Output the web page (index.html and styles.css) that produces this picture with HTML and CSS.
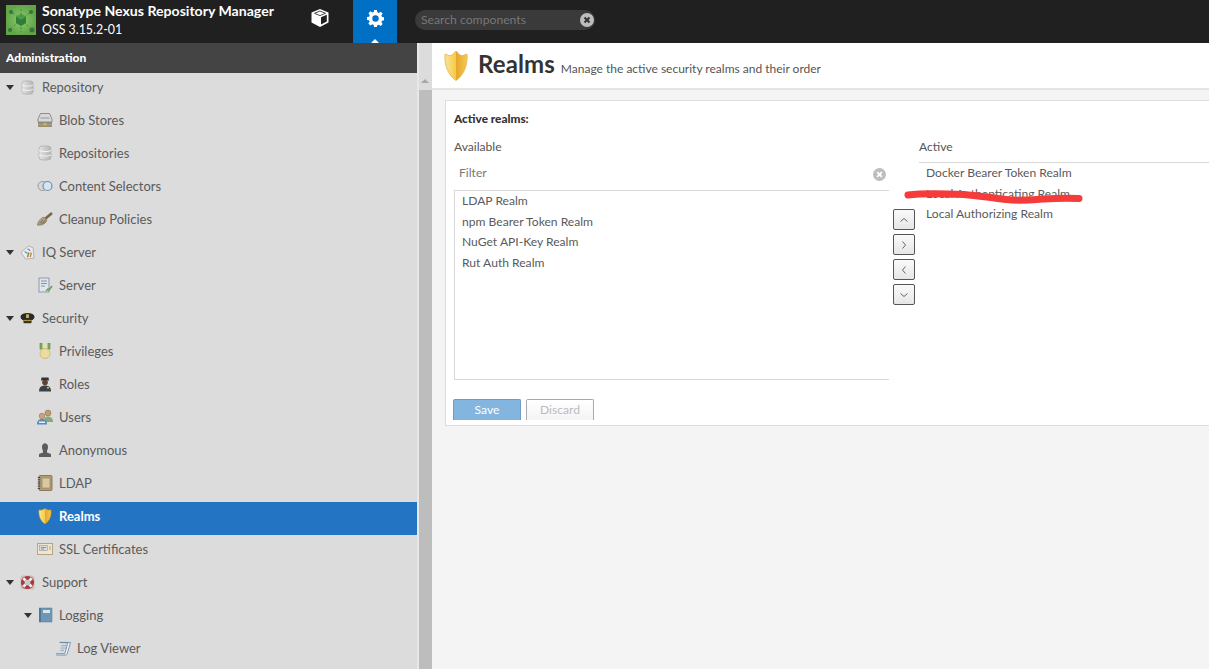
FILE: index.html
```html
<!DOCTYPE html>
<html lang="en">
<head>
<meta charset="utf-8">
<title>Realms</title>
<link rel="stylesheet" href="styles.css">
</head>
<body>
<svg class="defs" width="0" height="0"><defs>
  <radialGradient id="lg"><stop offset="0" stop-color="#8ccb6c"/><stop offset="1" stop-color="#62a548"/></radialGradient>
  <linearGradient id="db" x1="0" x2="1" y1="0" y2="0"><stop offset="0" stop-color="#e4e4e4"/><stop offset="1" stop-color="#b5b5b5"/></linearGradient>
  <linearGradient id="sh" x1="0" x2="1" y1="0" y2="0"><stop offset="0" stop-color="#fbe594"/><stop offset=".48" stop-color="#f6cb4a"/><stop offset=".5" stop-color="#e6a52a"/><stop offset="1" stop-color="#f5c850"/></linearGradient>
  <linearGradient id="brush" x1="0" x2="1" y1="0" y2="1"><stop offset="0" stop-color="#c9b592"/><stop offset="1" stop-color="#8a7a62"/></linearGradient>
</defs></svg>
<header class="top">
  <svg class="logo" viewBox="0 0 30 30"><rect width="30" height="30" fill="url(#lg)"/><path d="M15 14L5 7M15 14l10-7M15 14v-11M15 14L5 24M15 14l10 10M15 14v13" stroke="#3c8a3a" stroke-width="1" stroke-dasharray="2 2"/><circle cx="5" cy="7" r="2" fill="#33753a"/><circle cx="25" cy="7" r="2" fill="#33753a"/><circle cx="4" cy="25" r="2" fill="#33753a"/><circle cx="26" cy="25" r="2.500" fill="#33753a"/><path d="M15 9l5 3v6l-5 3-5-3v-6z" fill="#2f7d38"/><path d="M15 9l5 3-5 3-5-3z" fill="#4a9a48"/></svg>
  <div class="brand"><div class="brand-name">Sonatype Nexus Repository Manager</div><div class="brand-ver">OSS 3.15.2-01</div></div>
  <div class="cube"><svg viewBox="0 0 18 18" width="18" height="18"><path d="M9 0l8.500 3.500v10L9 18 .5 13.500v-10z" fill="#fff"/><path d="M9 2L14.500 4.300 9 6.600 3.500 4.300z" fill="#fff" stroke="#202020" stroke-width=".8"/><path d="M10 8.200l5.800-2.500v6.800L10 15.600z" fill="#202020"/></svg></div>
  <div class="gear-tab"><svg viewBox="0 0 24 24" width="17" height="17"><path fill="#fff" fill-rule="evenodd" d="M10 0h4l.6 3.200 2 .9 2.700-1.800 2.800 2.800-1.800 2.700.9 2 3.100.6v4l-3.100.6-.9 2 1.800 2.700-2.800 2.800-2.700-1.800-2 .9L14 24h-4l-.6-3-2-.9-2.700 1.800-2.800-2.800 1.800-2.700-.9-2L0 14v-4l3-.6.9-2-1.800-2.700 2.800-2.800 2.700 1.800 2-.9zM12 7.500a4.500 4.500 0 100 9 4.500 4.500 0 000-9z"/></svg><span class="tab-arrow"></span></div>
  <div class="search"><span class="search-text">Search components</span><svg viewBox="0 0 14 14" width="14" height="14"><circle cx="7" cy="7" r="7" fill="#bdbdbd"/><path d="M4.500 4.500l5 5M9.500 4.500l-5 5" stroke="#333" stroke-width="2"/></svg></div>
</header>
<div class="body-row">
  <aside class="side">
    <div class="side-title">Administration</div>
    <nav class="tree">
      <div class="row l0"><span class="arrow"></span><svg class="ic" viewBox="0 0 16 16"><rect x="2" y="1" width="12" height="14" rx="3" fill="url(#db)" stroke="#aaa" stroke-width=".7"/><path d="M2 5.500c3 1.500 9 1.500 12 0M2 10c3 1.500 9 1.500 12 0" stroke="#f4f4f4" fill="none"/></svg><span>Repository</span></div>
      <div class="row l1"><svg class="ic" viewBox="0 0 16 16"><path d="M3.500 1.500h9L15 7v3H1V7z" fill="#d8d8d8" stroke="#8d8d8d"/><path d="M3.500 6h9" stroke="#999"/><rect x="1" y="10" width="14" height="2.500" fill="#8b8b8b"/><rect x="1" y="12.500" width="14" height="2.500" fill="#99906f"/><rect x="6.500" y="11" width="3" height="2.500" fill="#e0b030"/></svg><span>Blob Stores</span></div>
      <div class="row l1"><svg class="ic" viewBox="0 0 16 16"><rect x="2" y="1" width="12" height="14" rx="3" fill="url(#db)" stroke="#aaa" stroke-width=".7"/><path d="M2 5.500c3 1.500 9 1.500 12 0M2 10c3 1.500 9 1.500 12 0" stroke="#f4f4f4" fill="none"/></svg><span>Repositories</span></div>
      <div class="row l1"><svg class="ic" viewBox="0 0 16 16"><circle cx="5.500" cy="8" r="4.500" fill="#d8d8d8" stroke="#9a9a9a"/><circle cx="10.500" cy="8" r="4.500" fill="#d6e4f0" stroke="#6b8eb0" stroke-width="1.200"/></svg><span>Content Selectors</span></div>
      <div class="row l1"><svg class="ic" viewBox="0 0 16 16"><path d="M0 14c2-5 3.500-7 7-8l3 3c-1 3.500-5 6-10 5z" fill="url(#brush)" stroke="#7b6a52" stroke-width=".5"/><path d="M8.500 7.500L15 2" stroke="#7a6742" stroke-width="2.600"/><path d="M3 12l3-3M5 13l3-3" stroke="#6f6250" stroke-width=".6"/></svg><span>Cleanup Policies</span></div>
      <div class="row l0"><span class="arrow"></span><svg class="ic" viewBox="0 0 16 16"><path d="M1 8l8-7 5 2 1 11-9 1z" fill="#ececec" stroke="#9a9a9a" stroke-width=".7"/><path d="M5 7l3 2M8 4l3 2" stroke="#6f8fb0" stroke-width="1.400"/><path d="M8 13l1.500-5" stroke="#5a9a5a" stroke-width="1.500"/><path d="M11 13l1-5" stroke="#d8823a" stroke-width="1.500"/></svg><span>IQ Server</span></div>
      <div class="row l1"><svg class="ic" viewBox="0 0 16 16"><rect x="2" y="1" width="10" height="14" fill="#dfe6ee" stroke="#7a8a9a" stroke-width=".8"/><path d="M4 4h6M4 6.500h6M4 9h4" stroke="#7a8a9a" stroke-width=".9"/><path d="M9 14l2-2 1 1 3-4" stroke="#6c9a5a" stroke-width="1.500" fill="none"/></svg><span>Server</span></div>
      <div class="row l0"><span class="arrow"></span><svg class="ic" viewBox="0 0 16 16"><ellipse cx="8" cy="6.500" rx="7.500" ry="4.500" fill="#2a2a2a"/><path d="M3.500 10.500h9L12 13H4z" fill="#333"/><rect x="6.500" y="3.500" width="3" height="4" fill="#d2b356"/><rect x="4" y="9.500" width="8" height="1" fill="#c9a94a"/></svg><span>Security</span></div>
      <div class="row l1"><svg class="ic" viewBox="0 0 16 16"><rect x="3" y="0" width="10" height="6" fill="#7ea75a" stroke="#5f8a42" stroke-width=".6"/><rect x="5.500" y="0" width="5" height="6" fill="#d8e6b8"/><circle cx="8" cy="10.500" r="5" fill="#ecdca0" stroke="#cdbb7e"/></svg><span>Privileges</span></div>
      <div class="row l1"><svg class="ic" viewBox="0 0 16 16"><path d="M4.500 1.500h7l.5 3H4z" fill="#333"/><circle cx="8" cy="6.500" r="2.800" fill="#5d4030"/><path d="M2 15.500c0-4 2-6 6-6s6 2 6 6z" fill="#3c4148"/><rect x="10" y="11" width="2" height="1.500" fill="#d8b84a"/></svg><span>Roles</span></div>
      <div class="row l1"><svg class="ic" viewBox="0 0 16 16"><circle cx="11" cy="4" r="3" fill="#c09a72" stroke="#8a6a4a" stroke-width=".5"/><path d="M7 13c0-4 1.500-5.500 4-5.500s5 1.500 5 5.500z" fill="#8aa878"/><circle cx="5" cy="7" r="2.800" fill="#cfa27a" stroke="#8a6a4a" stroke-width=".5"/><path d="M0 15.500c0-4 2-5.500 5-5.500s5 1.500 5 5.500z" fill="#5a8ac0"/><rect x="2" y="12.500" width="6" height="1.500" fill="#e8f0f8"/></svg><span>Users</span></div>
      <div class="row l1"><svg class="ic" viewBox="0 0 16 16"><path d="M5 5c0-5 6-5 6 0 0 2-.8 3-1 4v1.500l4 1.500v3H2v-3l4-1.500V9C5.800 8 5 7 5 5z" fill="#5c5c5c"/></svg><span>Anonymous</span></div>
      <div class="row l1"><svg class="ic" viewBox="0 0 16 16"><rect x="2" y="0.500" width="13" height="15" rx="1" fill="#b59c72" stroke="#7a6a4a" stroke-width=".8"/><rect x="5" y="3" width="8" height="10" fill="#d8c9a4" stroke="#8f7f5e" stroke-width=".6"/><path d="M2 2v12" stroke="#444" stroke-width="2.500" stroke-dasharray="1 1.200"/></svg><span>LDAP</span></div>
      <div class="row l1 selected"><svg class="ic" viewBox="0 0 16 16"><path d="M8 .5c1.500 1 3 2 6 1.500.5 6-1.500 11-6 14C3.500 13 1.500 8 2 2c3 .5 4.500-.5 6-1.500z" fill="url(#sh)" stroke="#d99a20" stroke-width=".6"/></svg><span>Realms</span></div>
      <div class="row l1"><svg class="ic" viewBox="0 0 16 16"><rect x=".5" y="2.500" width="15" height="11" fill="#f0e6d0" stroke="#b5a582"/><rect x="2.500" y="4.500" width="8" height="5" fill="#dcdcdc" stroke="#8a8a8a" stroke-width=".5"/><path d="M4 6.500h5M4 8h3" stroke="#777" stroke-width=".7"/><path d="M12 6h2M12 8h2" stroke="#a09070" stroke-width=".8"/></svg><span>SSL Certificates</span></div>
      <div class="row l0"><span class="arrow"></span><svg class="ic" viewBox="0 0 16 16"><rect x=".5" y=".5" width="15" height="15" rx="3" fill="#c8c0c0"/><circle cx="8" cy="8" r="7" fill="#a83a3a"/><path d="M3.500 3.500l2.500 2.500M12.500 3.500L10 6M3.500 12.500L6 10M12.500 12.500L10 10" stroke="#eee" stroke-width="3"/><circle cx="8" cy="8" r="3" fill="#c9c9c9"/></svg><span>Support</span></div>
      <div class="row l2"><span class="arrow"></span><svg class="ic" viewBox="0 0 14 16"><rect x="0" y="1" width="13" height="14" fill="#6f97b5" stroke="#557a96" stroke-width=".5"/><rect x="0" y="1" width="2" height="14" fill="#4f7896"/><rect x="4" y="3" width="7" height="3" fill="#d7e5ef"/></svg><span>Logging</span></div>
      <div class="row l3"><svg class="ic" viewBox="0 0 16 16"><path d="M4 1.500h11.500L12 13.500c-.3 1-1 1.500-2 1.500H1c-.8 0-1-1-.5-1.500h9L12.500 2z" fill="#eef3f8" stroke="#5a7f9e" stroke-width=".8"/><path d="M5.500 5h6M5 7.500h6M4.500 10h4" stroke="#7a9ab5" stroke-width=".8"/></svg><span>Log Viewer</span></div>
    </nav>
  </aside>
  <div class="scrollbar"><div class="scroll-gutter"></div><div class="scroll-track"><span class="scroll-up"></span><div class="scroll-thumb"></div></div></div>
  <main class="main">
    <div class="page-head">
      <svg class="head-ic" viewBox="0 0 24 31"><path d="M12 1c2 1.500 3 4 5 4.500 2 .5 4-1 6-1.500.8 11-3 21-11 26.500C4 25 .2 15 1 4c2 .5 4 2 6 1.500 2-.5 3-3 5-4.500z" fill="url(#sh)" stroke="#dfb24a" stroke-width=".8"/></svg>
      <h1 class="page-title">Realms</h1>
      <span class="page-sub">Manage the active security realms and their order</span>
    </div>
    <div class="content">
      <section class="panel">
        <div class="panel-title">Active realms:</div>
        <div class="picker">
          <div class="col-left">
            <div class="col-label">Available</div>
            <div class="filter"><span>Filter</span><svg viewBox="0 0 14 14" width="13" height="13"><circle cx="7" cy="7" r="7" fill="#bdbdbd"/><path d="M4.500 4.500l5 5M9.500 4.500l-5 5" stroke="#fff" stroke-width="2"/></svg></div>
            <ul class="list list-left">
              <li>LDAP Realm</li>
              <li>npm Bearer Token Realm</li>
              <li>NuGet API-Key Realm</li>
              <li>Rut Auth Realm</li>
            </ul>
          </div>
          <div class="movers">
            <button class="mv"><svg viewBox="0 0 10 10" width="10" height="10"><path d="M1.500 6.500L5 3.500l3.500 3" /></svg></button>
            <button class="mv"><svg viewBox="0 0 10 10" width="10" height="10"><path d="M3.500 1.500L6.500 5l-3 3.500" /></svg></button>
            <button class="mv"><svg viewBox="0 0 10 10" width="10" height="10"><path d="M6.500 1.500L3.500 5l3 3.500" /></svg></button>
            <button class="mv"><svg viewBox="0 0 10 10" width="10" height="10"><path d="M1.500 3.500L5 6.500l3.500-3" /></svg></button>
          </div>
          <div class="col-right">
            <div class="col-label">Active</div>
            <ul class="list list-right">
              <li>Docker Bearer Token Realm</li>
              <li>Local Authenticating Realm</li>
              <li>Local Authorizing Realm</li>
            </ul>
            <svg class="scribble" viewBox="0 0 182 16" width="182" height="16"><path d="M4 6c15-2 35-1.500 56-.5 14 1 24 3 42 5 14 1.500 24 .5 36-.5 10-.5 18-1 37-.5" fill="none" stroke="#f63b3b" stroke-width="7" stroke-linecap="round"/></svg>
          </div>
        </div>
        <div class="actions"><button class="btn btn-save">Save</button><button class="btn btn-discard">Discard</button></div>
      </section>
    </div>
  </main>
</div>
</body>
</html>
```
FILE: styles.css
```css
* { box-sizing: border-box; }
html, body { margin: 0; height: 100%; overflow: hidden; }
body { font-family: "Lato", "Liberation Sans", sans-serif; font-size: 13px; color: #444; background: #f4f4f4; }
.defs { position: absolute; }
.top { display: flex; align-items: stretch; height: 43px; background: #202020; color: #fff; }
.logo { width: 30px; height: 30px; margin: 5px 6px 0 6px; flex: none; }
.brand { width: 262px; padding-top: 2px; }
.brand-name { font-size: 14.100px; font-weight: 700; line-height: 17px; }
.brand-ver { font-size: 12.400px; line-height: 16px; margin-top: 3px; }
.cube { width: 32px; display: flex; justify-content: center; padding-top: 9px; }
.gear-tab { width: 44px; margin-left: 17px; background: #0070c4; position: relative; display: flex; justify-content: center; padding-top: 10px; }
.gear-tab svg { display: block; }
.tab-arrow { position: absolute; left: 18px; bottom: 0; border: 4px solid transparent; border-top: 0; border-bottom: 4px solid #fff; }
.search { width: 180px; height: 20px; margin: 10px 0 0 18px; border-radius: 10px; background: #3a3a3a; display: flex; align-items: center; justify-content: space-between; padding: 0 1px 0 6px; }
.search-text { color: #777; font-size: 12.200px; padding-bottom: 2px; }
.body-row { display: flex; height: 626px; }
.side { width: 417px; flex: none; background: #dcdcdc; overflow: hidden; }
.side-title { height: 30px; background: #444; color: #fff; font-size: 12px; font-weight: 900; line-height: 29px; padding-left: 6px; }
.row { display: flex; align-items: center; height: 33px; flex: none; color: #5a5a5a; padding-bottom: 5px; }
.l0 { padding-left: 6px; }
.l1 { padding-left: 37px; }
.l2 { padding-left: 24px; }
.l3 { padding-left: 56px; }
.arrow { width: 0; height: 0; border-left: 4.500px solid transparent; border-right: 4.500px solid transparent; border-top: 5px solid #333; margin-right: 6px; flex: none; }
.ic { width: 15px; height: 15px; margin-right: 6px; flex: none; }
.l0 .ic { margin-right: 7px; }
.l1 .ic { width: 16px; height: 16px; }
.l2 .arrow { margin-right: 7px; }
.l2 .ic { width: 14px; height: 16px; }
.selected { background: #2474c4; color: #fff; font-weight: 700; }
.scrollbar { width: 15px; flex: none; display: flex; background: #dcdcdc; }
.scroll-gutter { width: 2px; background: #e8e8e8; }
.scroll-track { width: 13px; padding-top: 35px; position: relative; }
.scroll-up { position: absolute; left: 2px; top: 36px; border: 4px solid transparent; border-top: 0; border-bottom: 4px solid #a8a8a8; }
.scroll-thumb { height: 591px; margin-top: 12px; background: #bdbdbd; }
.main { flex: 1; min-width: 0; display: flex; flex-direction: column; overflow: hidden; }
.page-head { height: 47px; flex: none; background: #fff; border-bottom: 2px solid #e4e4e4; display: flex; align-items: center; padding-left: 12px; }
.head-ic { width: 24px; height: 31px; flex: none; margin-right: 10px; }
.page-title { font-size: 24px; font-weight: 700; color: #333; margin: 0 6px 4px 0; letter-spacing: .1px; }
.page-sub { font-size: 12px; color: #555; padding-top: 6px; }
.content { padding: 10px 0 0 13px; }
.panel { width: 800px; height: 326px; background: #fff; border: 1px solid #ddd; position: relative; overflow: hidden; }
.panel-title { font-weight: 900; font-size: 11.800px; color: #333; padding: 11px 0 0 8px; line-height: 14px; }
.picker { display: flex; padding-left: 8px; margin-top: 13px; height: 241px; }
.col-left { width: 435px; flex: none; }
.col-label { line-height: 16px; font-size: 12.100px; color: #555; }
.filter { height: 35px; display: flex; align-items: center; justify-content: space-between; padding: 0 3px 0 5px; color: #777; font-size: 12.100px; }
.filter svg { margin-top: 4px; }
.list { list-style: none; margin: 0; padding: 0; font-size: 12.100px; color: #5a5a5a; }
.list li { line-height: 20.600px; }
.list-left { height: 190px; border: 1px solid #d8d8d8; border-right: 0; padding: 0 0 0 7px; }
.movers { width: 30px; flex: none; padding: 70px 0 0 4px; display: flex; flex-direction: column; gap: 4px; }
.mv { width: 22px; height: 21px; padding: 0; border: 1px solid #555; border-radius: 2px; background: linear-gradient(#fafafa, #e6e6e6); display: flex; align-items: center; justify-content: center; }
.mv svg path { fill: none; stroke: #666; stroke-width: 1; }
.col-right { flex: 1; position: relative; }
.list-right { border-top: 1px solid #d8d8d8; margin-top: 7px; padding: 0 0 0 7px; height: 218px; }
.scribble { position: absolute; left: -15px; top: 50px; }
.actions { display: flex; gap: 5px; padding-left: 7px; margin-top: 19px; }
.btn { width: 68px; height: 21px; border-radius: 2px 2px 0 0; font: inherit; font-size: 12.100px; padding: 0 0 2px; }
.btn-save { background: #84b5de; border: 1px solid #6c9dc7; border-bottom: 0; color: #fff; }
.btn-discard { background: linear-gradient(#fff, #f4f4f4); border: 1px solid #aaa; border-bottom: 0; color: #bbb; }
```
